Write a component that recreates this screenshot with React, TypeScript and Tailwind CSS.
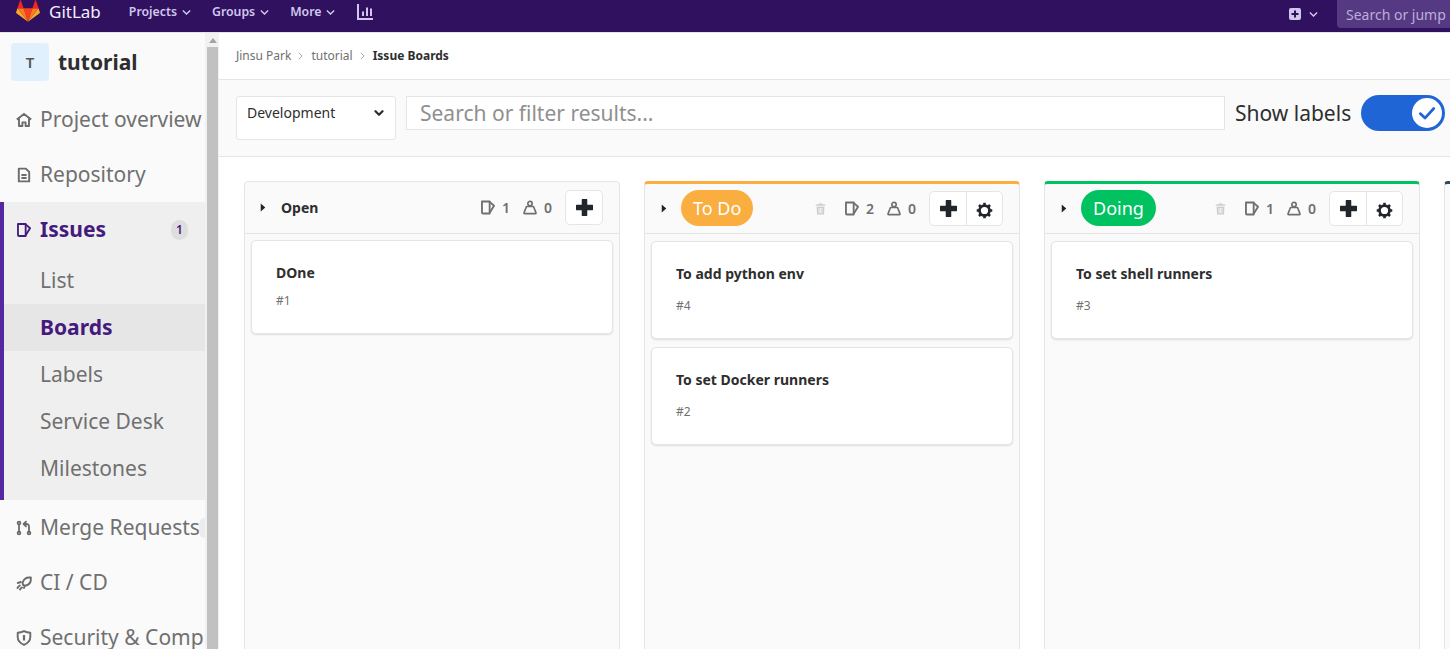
import React from "react";

const Caret = ({ className = "", width = 1.6 }: { className?: string; width?: number }) => (
  <svg viewBox="0 0 10 10" className={className} fill="none" stroke="currentColor" strokeWidth={width} strokeLinecap="round" strokeLinejoin="round">
    <path d="M1.500 3.200 5 6.800l3.500-3.600" />
  </svg>
);

const IssueIcon = ({ className = "" }: { className?: string }) => (
  <svg viewBox="0 0 16 16" className={className} fill="none" stroke="currentColor" strokeWidth="2.100" strokeLinejoin="round">
    <path d="M1.100 1.100h8.800v13.800H2.300a1.200 1.200 0 0 1-1.200-1.200z" />
    <path d="M9.900 1.600 14.900 6 9.900 14" />
  </svg>
);

const WeightIcon = ({ className = "" }: { className?: string }) => (
  <svg viewBox="0 0 16 16" className={className} fill="none" stroke="currentColor" strokeWidth="1.900" strokeLinejoin="round">
    <circle cx="8" cy="3.500" r="2.500" />
    <path d="M4 6.900h8l2.800 6.900a.8.800 0 0 1-.7 1.200H1.900a.8.800 0 0 1-.7-1.200z" />
  </svg>
);

const Trash = () => (
  <svg viewBox="0 0 16 16" className="w-[11px] h-[12px] block" fill="#cbcbd2">
    <path d="M5.500 0h5l.6 1.600H15V3.400H1V1.600h3.900z" />
    <path d="M2.300 4.600h11.400L13 16H3zM5.200 6.400v7.600h1.200V6.400zm2.200 0v7.600h1.200V6.400zm2.200 0v7.600h1.200V6.400z" fillRule="evenodd" />
  </svg>
);

const Plus = () => (
  <svg viewBox="0 0 16 16" className="w-[17px] h-[17px] -mt-[1px]" fill="#22252b">
    <path d="M5.800 0h4.400a.4.400 0 0 1 .4.400v5h5a.4.400 0 0 1 .4.400v4.400a.4.400 0 0 1-.4.400h-5v5a.4.400 0 0 1-.4.400H5.800a.4.400 0 0 1-.4-.400v-5h-5a.4.400 0 0 1-.4-.400V5.800a.4.400 0 0 1 .4-.4h5v-5a.4.400 0 0 1 .4-.4z" />
  </svg>
);

const Gear = () => (
  <svg viewBox="0 0 24 24" className="w-[17px] h-[17px] mt-[3px]" fill="none" stroke="#22252b">
    <circle cx="12" cy="12" r="7" strokeWidth="3.800" />
    <path d="M12 1v3.600M12 19.400V23M1 12h3.600M19.400 12H23M4.200 4.200l2.600 2.600M17.200 17.200l2.600 2.600M4.200 19.800l2.600-2.600M17.200 6.800l2.600-2.600" strokeWidth="3.600" />
  </svg>
);

const Disclosure = () => (
  <svg viewBox="0 0 6 10" className="w-[6px] h-[9px] shrink-0" fill="#1f2430">
    <path d="M0.500 0.500 5.500 5 0.500 9.500z" />
  </svg>
);

const Chevron = () => (
  <svg viewBox="0 0 6 10" className="ml-[7px] mr-[8px] w-[5px] h-[8px] shrink-0" fill="none" stroke="#999999" strokeWidth="1.100">
    <path d="M1 1l4 4-4 4" />
  </svg>
);

const SideIcon = ({ name }: { name: string }) => {
  const cls = "w-[16px] h-[16px] shrink-0 text-[#6b6b6b]";
  if (name === "home")
    return (
      <svg viewBox="0 0 16 16" className={cls} fill="none" stroke="currentColor" strokeWidth="1.900" strokeLinejoin="round">
        <path d="M0.800 7.600 8 2l7.200 5.600M3 6.600V14h3.400v-3.600h3.200V14H13V6.600" />
      </svg>
    );
  if (name === "doc")
    return (
      <svg viewBox="0 0 16 16" className={cls} fill="none" stroke="currentColor" strokeWidth="1.900" strokeLinejoin="round">
        <path d="M2.800 1.600h7l3.400 3.400v9.400H2.800z" />
        <path d="M5.400 8h5.200M5.400 11h5.200" />
      </svg>
    );
  if (name === "merge")
    return (
      <svg viewBox="0 0 16 16" className={cls} fill="none" stroke="currentColor" strokeWidth="1.800" strokeLinecap="round" strokeLinejoin="round">
        <circle cx="3" cy="3" r="1.400" />
        <circle cx="3" cy="13" r="1.400" />
        <circle cx="13" cy="13" r="1.400" />
        <path d="M3 4.600v6.800M13 11.400V6.500a2.500 2.500 0 0 0-2.500-2.500H8M10 1.600 7.600 4 10 6.400" />
      </svg>
    );
  if (name === "rocket")
    return (
      <svg viewBox="0 0 16 16" className={cls} fill="none" stroke="currentColor" strokeWidth="1.900" strokeLinecap="round" strokeLinejoin="round">
        <path d="M14.800 2.500c-3.800-.4-7 1.200-8 4.800-.3 1.200 0 2.200.5 2.700.5.500 1.500.8 2.700.5 3.600-1 5.200-4.200 4.800-8zM4.800 7 1.800 8M8 13l1-2.500M3.800 10.500c-1 .6-1.800 1.500-2.300 2.500M6 12.500c-.8.500-1.500 1-2 2" />
      </svg>
    );
  if (name === "shield")
    return (
      <svg viewBox="0 0 16 16" className={cls} fill="none" stroke="currentColor" strokeWidth="1.900" strokeLinejoin="round">
        <path d="M8 1.200c2 1 4 1.500 6.300 1.500v4.500c0 3.400-2.600 6-6.300 7.600-3.700-1.600-6.300-4.200-6.300-7.600V2.700C4 2.700 6 2.200 8 1.200z" />
        <path d="M8 5v5.500" strokeWidth="2.200" />
      </svg>
    );
  return null;
};

const TopItem = ({ icon, label }: { icon: string; label: string }) => (
  <div className="flex items-center h-[55px]">
    <div className="w-[40px] shrink-0 pl-[16px]"><SideIcon name={icon} /></div>
    <span className="text-[21px] text-[#707070] whitespace-nowrap">{label}</span>
  </div>
);

const SubItem = ({ label, active }: { label: string; active?: boolean }) => (
  <div className={`flex items-center h-[47px] pl-[36px] text-[21px] whitespace-nowrap ${active ? "bg-[#e6e6e6] font-bold text-[#451a7e]" : "text-[#707070]"}`}>
    {label}
  </div>
);

const Sidebar = () => (
  <aside className="w-[205px] shrink-0 bg-[#fafafa] overflow-hidden">
    <div className="flex items-center h-[38px] mt-[10px] mb-[11px] pl-[11px]">
      <div className="w-[38px] h-[38px] rounded-[4px] bg-[#e0f0fd] flex items-center justify-center text-[15px] font-semibold text-[#555]">T</div>
      <span className="ml-[9px] pt-[2px] text-[21px] font-bold text-[#2e2e2e]">tutorial</span>
    </div>
    <TopItem icon="home" label="Project overview" />
    <TopItem icon="doc" label="Repository" />
    <div className="bg-[#efefef] border-l-4 border-[#5528a0] pb-[8px]">
      <div className="flex items-center h-[55px]">
        <div className="w-[36px] pl-[13px]"><IssueIcon className="w-[14px] h-[14px] text-[#451a7e]" /></div>
        <span className="text-[21px] font-bold text-[#451a7e]">Issues</span>
        <span className="ml-auto mr-[17px] w-[17px] h-[20px] rounded-full bg-[#dedede] text-[#451a7e] text-[12px] font-semibold flex items-center justify-center">1</span>
      </div>
      <SubItem label="List" />
      <SubItem label="Boards" active />
      <SubItem label="Labels" />
      <SubItem label="Service Desk" />
      <SubItem label="Milestones" />
    </div>
    <div className="relative">
      <TopItem icon="merge" label="Merge Requests" />
      <span className="absolute right-[-6px] top-[18px] w-[12px] h-[20px] rounded-full bg-[#ececec]" />
    </div>
    <TopItem icon="rocket" label="CI / CD" />
    <TopItem icon="shield" label="Security & Compliance" />
  </aside>
);

const Scrollbar = () => (
  <div className="w-[14px] shrink-0 bg-[#f1f1f1] flex flex-col items-center pl-[2px] pr-[1px]">
    <div className="h-[14px] flex items-center justify-center">
      <svg viewBox="0 0 8 5" className="w-[8px] h-[5px]" fill="#a3a3a3"><path d="M4 0 8 5H0z" /></svg>
    </div>
    <div className="flex-1 w-full bg-[#c1c1c1]" />
  </div>
);

type Issue = { title: string; id: string };

const Count = ({ issues }: { issues: number }) => (
  <div className="flex items-center text-[14px] font-semibold text-[#6f6f6f]">
    <IssueIcon className="w-[14px] h-[15px] text-[#6f6f6f]" />
    <span className="ml-[7px]">{issues}</span>
    <WeightIcon className="ml-[13px] w-[14px] h-[15px] text-[#6f6f6f]" />
    <span className="ml-[7px]">0</span>
  </div>
);

const Card = ({ issue, tall }: { issue: Issue; tall: boolean }) => (
  <div className={`bg-white border border-[#e5e5e5] rounded-[5px] shadow-[0_1px_2px_rgba(0,0,0,0.12)] pl-[24px] pt-[22px] ${tall ? "h-[98px]" : "h-[94px]"}`}>
    <div className="text-[14px] leading-[20px] font-bold text-[#2e2e2e]">{issue.title}</div>
    <div className={`text-[12px] leading-[16px] text-[#707070] ${tall ? "mt-[14px]" : "mt-[10px]"}`}>{issue.id}</div>
  </div>
);

const BoardList = ({ label, color, issues }: { label: string; color?: string; issues: Issue[] }) => {
  return (
    <section
      className={`w-[376px] shrink-0 bg-[#fafafa] border-x border-b border-[#e5e5e5] rounded-t-[4px] h-[600px] ${color === "#f9ae3f" ? "border-t-[3px] border-t-[#f9ae3f]" : color === "#00c261" ? "border-t-[3px] border-t-[#00c261]" : "border-t border-t-[#e5e5e5]"}`}
    >
      <header className={`flex items-center border-b border-[#e5e5e5] pr-[16px] ${color ? "h-[50px] pl-[16px]" : "h-[52px] pl-[15px]"}`}>
        <Disclosure />
        {color ? (
          <span
            className={`ml-[14px] mb-[2px] h-[36px] px-[12px] rounded-full text-white text-[18px] leading-[37px] ${color === "#f9ae3f" ? "bg-[#f9ae3f]" : "bg-[#00c261]"}`}
          >
            {label}
          </span>
        ) : (
          <span className="ml-[15px] text-[14px] font-bold text-[#2e2e2e]">{label}</span>
        )}
        {color && <span className="ml-auto mr-[19px]"><Trash /></span>}
        <div className={color ? "" : "ml-auto"}><Count issues={issues.length} /></div>
        <div className="ml-[13px] flex h-[35px] bg-white border border-[#e5e5e5] rounded-[5px]">
          <div className="w-[36px] flex items-center justify-center"><Plus /></div>
          {color && (
            <div className="w-[36px] border-l border-[#e5e5e5] flex items-center justify-center"><Gear /></div>
          )}
        </div>
      </header>
      <div className={`px-[6px] flex flex-col gap-[8px] ${color ? "pt-[7px]" : "pt-[6px]"}`}>
        {issues.map((i) => (
          <Card key={i.id} issue={i} tall={!!color} />
        ))}
      </div>
    </section>
  );
};

export default function App() {
  return (
    <div className="w-[1450px] h-[649px] overflow-hidden flex flex-col bg-white" style={{ fontFamily: '"Noto Sans", sans-serif' }}>
      <nav className="h-[33px] shrink-0 bg-[#2f1160] border-b border-[#e5e5e5] flex items-start relative">
        <svg viewBox="0 0 26 24" className="ml-[16px] mt-0 w-[24px] h-[23px]">
          <path d="M13 23 17.800 8.400H8.200z" fill="#fb3e1c" />
          <path d="M13 23 8.200 8.400H1.500z" fill="#fd7a1f" />
          <path d="M1.500 8.400 0.100 13c-.1.400 0 .8.400 1L13 23z" fill="#fdaa26" />
          <path d="M1.500 8.400h6.700L5.300 0c-.2-.4-.7-.4-.9 0z" fill="#f5261b" />
          <path d="M13 23 17.800 8.400h6.700z" fill="#fd7a1f" />
          <path d="M24.500 8.400 25.900 13c.1.400 0 .8-.4 1L13 23z" fill="#fdaa26" />
          <path d="M24.500 8.400h-6.700L20.700 0c.2-.4.700-.4.900 0z" fill="#f5261b" />
        </svg>
        <span className="ml-[9px] text-[17px] leading-[24px] text-[#f3eefb]">GitLab</span>
        <div className="ml-[28px] flex items-center h-[24px] text-[12.300px] font-semibold text-[#d1c6ec]">
          <span>Projects</span>
          <Caret className="ml-[5px] w-[9px] h-[9px]" />
          <span className="ml-[21px]">Groups</span>
          <Caret className="ml-[5px] w-[9px] h-[9px]" />
          <span className="ml-[21px]">More</span>
          <Caret className="ml-[5px] w-[9px] h-[9px]" />
          <svg viewBox="0 0 16 16" className="ml-[22px] w-[16px] h-[16px]" fill="none" stroke="#d1c6ec" strokeWidth="2">
            <path d="M1 0v15h15" />
            <path d="M6 7.500V12M10 3.500V12M14 4.500V12" />
          </svg>
        </div>
        <div className="ml-auto flex items-center h-[28px]">
          <svg viewBox="0 0 12 12" className="w-[12px] h-[12px]">
            <rect width="12" height="12" rx="2" fill="#d1c6ec" />
            <path d="M6 2.500v7M2.500 6h7" stroke="#2f1160" strokeWidth="2" />
          </svg>
          <Caret className="ml-[8px] w-[9px] h-[9px] text-[#d1c6ec]" />
          <div className="ml-[19px] w-[113px] h-[28px] bg-[#553a83] rounded-bl-[4px] pl-[9px] text-[14px] leading-[30px] text-[#bcaedb] whitespace-nowrap overflow-hidden">Search or jump</div>
        </div>
      </nav>
      <div className="flex-1 flex min-h-0">
        <Sidebar />
        <Scrollbar />
        <main className="flex-1 min-w-0 flex flex-col">
          <div className="h-[47px] shrink-0 border-b border-[#e5e5e5] flex items-center pl-[17px] text-[12px] text-[#707070]">
            <span>Jinsu Park</span>
            <Chevron />
            <span>tutorial</span>
            <Chevron />
            <span className="font-bold text-[#2e2e2e]">Issue Boards</span>
          </div>
          <div className="h-[77px] shrink-0 bg-[#fafafa] border-b border-[#e5e5e5] flex items-start pl-[17px] pt-[16px]">
            <div className="w-[160px] h-[44px] bg-white border border-[#e5e5e5] rounded-[3px] flex items-start justify-between pl-[10px] pr-[11px] pt-[5px] text-[14px] text-[#2e2e2e]">
              <span>Development</span>
              <Caret className="mt-[6px] w-[10px] h-[10px]" width={2.2} />
            </div>
            <div className="ml-[10px] w-[819px] h-[34px] bg-white border border-[#e5e5e5] flex items-center pl-[13px] pt-[1px] text-[21px] text-[#8f8f8f]">Search or filter results...</div>
            <span className="ml-[10px] text-[21px] leading-[34px] text-[#2e2e2e] whitespace-nowrap">Show labels</span>
            <div className="ml-[10px] -mt-[1px] w-[84px] h-[36px] shrink-0 rounded-full bg-[#1f65d6] relative">
              <div className="absolute right-[3px] top-[3px] w-[30px] h-[30px] rounded-full bg-white flex items-center justify-center">
                <svg viewBox="0 0 16 16" className="w-[18px] h-[18px]" fill="none" stroke="#1f65d6" strokeWidth="2.400" strokeLinecap="round" strokeLinejoin="round">
                  <path d="M2 8.500 6.200 12.500 14 4" />
                </svg>
              </div>
            </div>
          </div>
          <div className="flex-1 min-h-0 flex gap-[24px] pl-[25px] pt-[24px] overflow-hidden">
            <BoardList label="Open" issues={[{ title: "DOne", id: "#1" }]} />
            <BoardList label="To Do" color="#f9ae3f" issues={[{ title: "To add python env", id: "#4" }, { title: "To set Docker runners", id: "#2" }]} />
            <BoardList label="Doing" color="#00c261" issues={[{ title: "To set shell runners", id: "#3" }]} />
            <section className="w-[376px] shrink-0 bg-[#fafafa] border-x border-[#e5e5e5] border-t-[3px] border-t-[#34495e] rounded-t-[4px] h-[600px]" />
          </div>
        </main>
      </div>
    </div>
  );
}
